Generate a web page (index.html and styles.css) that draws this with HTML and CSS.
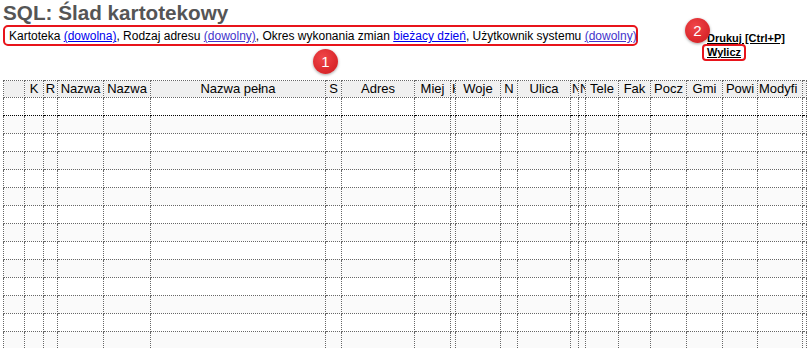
FILE: index.html
```html
<!DOCTYPE html>
<html lang="pl">
<head>
<meta charset="utf-8">
<title>SQL: Ślad kartotekowy</title>
<link rel="stylesheet" href="styles.css">
</head>
<body>
<div class="top">
  <div class="head">
    <h1 class="title">SQL: Ślad kartotekowy</h1>
    <div class="filters">
      <span>Kartoteka <a class="lnk" href="#">(dowolna)</a>, Rodzaj adresu <a class="lnk v" href="#">(dowolny)</a>, Okres wykonania zmian <a class="lnk" href="#">bieżacy dzień</a>, Użytkownik systemu <a class="lnk v" href="#">(dowolny)</a></span>
      <span class="badge b1">1</span>
    </div>
  </div>
  <div class="actions">
    <a class="act" href="#">Drukuj [Ctrl+P]</a>
    <a class="act calc" href="#">Wylicz</a>
    <span class="badge b2">2</span>
  </div>
</div>
<table class="grid">
  <colgroup>
    <col class="w21"><col class="w19"><col class="w14"><col class="w46"><col class="w47"><col class="w175"><col class="w16"><col class="w73"><col class="w36"><col class="w5"><col class="w45"><col class="w17"><col class="w53"><col class="w8"><col class="w7"><col class="w33"><col class="w32"><col class="w36"><col class="w36"><col class="w35"><col class="w45"><col class="w4">
  </colgroup>
  <thead>
    <tr><th></th><th>K</th><th>R</th><th>Nazwa</th><th>Nazwa</th><th>Nazwa pełna</th><th>S</th><th>Adres</th><th>Miej</th><th>K</th><th>Woje</th><th>N</th><th>Ulica</th><th>N</th><th>N</th><th>Tele</th><th>Fak</th><th>Pocz</th><th>Gmi</th><th>Powi</th><th class="left">Modyfi</th><th></th></tr>
  </thead>
  <tbody id="rows"></tbody>
</table>
<script src="app.js"></script>
</body>
</html>
```
FILE: app.js
```js
var tb = document.getElementById('rows');
for (var i = 0; i < 14; i++) {
  var tr = document.createElement('tr');
  if (i === 0) tr.className = 'focus';
  for (var j = 0; j < 22; j++) {
    tr.appendChild(document.createElement('td'));
  }
  tb.appendChild(tr);
}
```
FILE: styles.css
```css
html, body {
  margin: 0;
  padding: 0;
  background: #fff;
  font-family: "Liberation Sans", Arial, sans-serif;
  color: #000;
  overflow: hidden;
}
.top {
  display: flex;
  align-items: flex-start;
  height: 80px;
}
.head {
  padding-left: 3px;
}
.title {
  margin: 0;
  font-size: 20.7px;
  line-height: 25px;
  font-weight: bold;
  color: #555;
  white-space: nowrap;
}
.filters {
  position: relative;
  box-sizing: border-box;
  width: 635px;
  height: 21px;
  border: 2px solid #e8141b;
  border-radius: 5px;
  padding: 1px 0 0 4px;
  font-size: 12px;
  line-height: 16px;
  white-space: nowrap;
}
.lnk {
  color: #0000ee;
  text-decoration: underline;
}
.lnk.v {
  color: #4433cc;
}
.badge {
  position: absolute;
  width: 25px;
  height: 25px;
  border-radius: 50%;
  background: radial-gradient(circle at 40% 35%, #f0474a 0%, #dc2a2e 60%, #c81e22 100%);
  box-shadow: 0 1px 3px rgba(0,0,0,0.35);
  color: #fff;
  font-size: 15px;
  line-height: 25px;
  text-align: center;
  font-family: "Liberation Sans", Arial, sans-serif;
}
.b1 {
  left: 308px;
  top: 22px;
}
.actions {
  position: relative;
  margin-left: 67px;
  margin-top: 32px;
  display: flex;
  flex-direction: column;
  align-items: flex-start;
}
.act {
  color: #000;
  font-weight: bold;
  font-size: 11px;
  line-height: 12px;
  text-decoration: underline;
  margin-left: 2px;
}
.calc {
  margin-top: 0;
  margin-left: -3px;
  padding: 0 3px 1px 3px;
  border: 2px solid #e8141b;
  border-radius: 4px;
}
.b2 {
  left: -20px;
  top: -14px;
}
.grid {
  margin-left: 3px;
  border-collapse: collapse;
  table-layout: fixed;
  width: 803px;
  font-family: "Liberation Sans", Tahoma, sans-serif;
  font-size: 13px;
}
.grid th, .grid td {
  border: 1px dotted #666;
  padding: 0 1px;
  overflow: hidden;
  white-space: nowrap;
}
.grid th {
  height: 16px;
  background: #f0f0f0;
  font-weight: normal;
  text-align: center;
  line-height: 16px;
  color: #000;
}
.grid th.left {
  text-align: left;
}
.grid td {
  height: 17px;
  background: #fff;
}
.grid tbody tr:nth-child(even) td {
  background: #fafafa;
}
.grid tr.focus td {
  border-top: 1px dotted #000;
  border-bottom: 1px dotted #000;
}
.w21 { width: 21px; }
.w19 { width: 19px; }
.w14 { width: 14px; }
.w46 { width: 46px; }
.w47 { width: 47px; }
.w175 { width: 175px; }
.w16 { width: 16px; }
.w73 { width: 73px; }
.w36 { width: 36px; }
.w5 { width: 5px; }
.w45 { width: 45px; }
.w17 { width: 17px; }
.w53 { width: 53px; }
.w8 { width: 8px; }
.w7 { width: 7px; }
.w33 { width: 33px; }
.w32 { width: 32px; }
.w35 { width: 35px; }
.w4 { width: 4px; }
```
